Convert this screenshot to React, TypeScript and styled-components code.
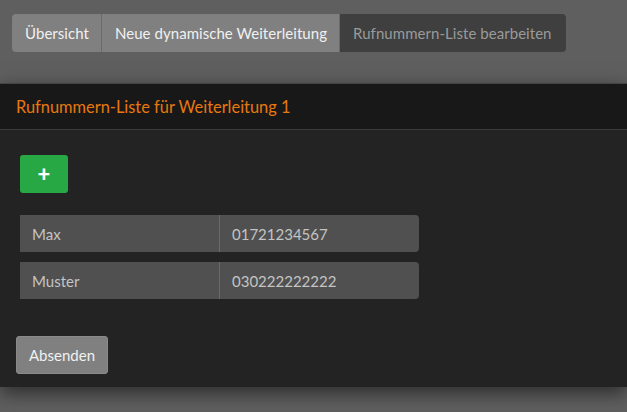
import React from "react";
import styled, { createGlobalStyle } from "styled-components";

const GlobalStyle = createGlobalStyle`
  html, body {
    margin: 0;
    padding: 0;
    background: #5f5f5f;
    font-family: Lato, "Noto Sans", sans-serif;
    font-size: 15px;
  }
`;

const Page = styled.div`
  width: 627px;
  height: 412px;
  overflow: hidden;
  background: #5f5f5f;
`;

const Nav = styled.div`
  padding: 14px 12px 31px;
  display: flex;
`;

const Crumbs = styled.div`
  display: flex;
  border-radius: 4px;
  overflow: hidden;
`;

const Crumb = styled.div<{ $active?: boolean }>`
  height: 38px;
  display: flex;
  align-items: center;
  padding: 0 12px 0 13px;
  letter-spacing: 0.05px;
  background: ${p => (p.$active ? "#3f3f3f" : "#808080")};
  color: ${p => (p.$active ? "#9a9a9a" : "#f0f0f0")};
  & + & {
    border-left: 1px solid #6a6a6a;
  }
  &:last-child {
    padding-right: 14px;
  }
`;

const Panel = styled.div`
  background: #232323;
  border-top: 1px solid #444;
  box-shadow: 0 6px 18px rgba(0, 0, 0, 0.55);
`;

const PanelHeader = styled.div`
  height: 45px;
  display: flex;
  align-items: center;
  padding: 0 16px;
  background: #181818;
  border-bottom: 1px solid #3a3a3a;
  color: #e8790f;
  font-size: 16.4px;
`;

const PanelBody = styled.div`
  padding: 25px 16px 13px;
`;

const ListArea = styled.div`
  padding: 0 4px;
  display: flex;
  flex-direction: column;
  align-items: flex-start;
  gap: 10px;
`;

const AddButton = styled.button`
  width: 48px;
  height: 38px;
  margin-bottom: 12px;
  border: none;
  border-radius: 3px;
  background: #28a745;
  color: #fff;
  font-family: inherit;
  font-size: 22px;
  font-weight: 900;
  display: flex;
  align-items: center;
  justify-content: center;
  padding: 0 0 2px;
`;

const InputGroup = styled.div`
  display: flex;
  width: 399px;
  height: 37px;
`;

const Field = styled.div<{ $last?: boolean }>`
  flex: 1;
  display: flex;
  align-items: center;
  padding: 0 12px;
  background: #505050;
  color: #c4c4c4;
  border-radius: ${p => (p.$last ? "0 4px 4px 0" : "0")};
  border-left: ${p => (p.$last ? "1px solid #6a6a6a" : "none")};
`;

const SubmitButton = styled.button`
  margin-top: 37px;
  height: 38px;
  padding: 0 12px;
  background: #808080;
  border: 1px solid #8a8a8a;
  border-radius: 3px;
  color: #f0f0f0;
  font-family: inherit;
  font-size: 15px;
`;

const entries = [
  { name: "Max", number: "01721234567" },
  { name: "Muster", number: "030222222222" },
];

export default function App() {
  return (
    <Page>
      <GlobalStyle />
      <Nav>
        <Crumbs>
          <Crumb>Übersicht</Crumb>
          <Crumb>Neue dynamische Weiterleitung</Crumb>
          <Crumb $active>Rufnummern-Liste bearbeiten</Crumb>
        </Crumbs>
      </Nav>
      <Panel>
        <PanelHeader>Rufnummern-Liste für Weiterleitung 1</PanelHeader>
        <PanelBody>
          <ListArea>
            <AddButton>+</AddButton>
            {entries.map(e => (
              <InputGroup key={e.name}>
                <Field>{e.name}</Field>
                <Field $last>{e.number}</Field>
              </InputGroup>
            ))}
          </ListArea>
          <SubmitButton>Absenden</SubmitButton>
        </PanelBody>
      </Panel>
    </Page>
  );
}
